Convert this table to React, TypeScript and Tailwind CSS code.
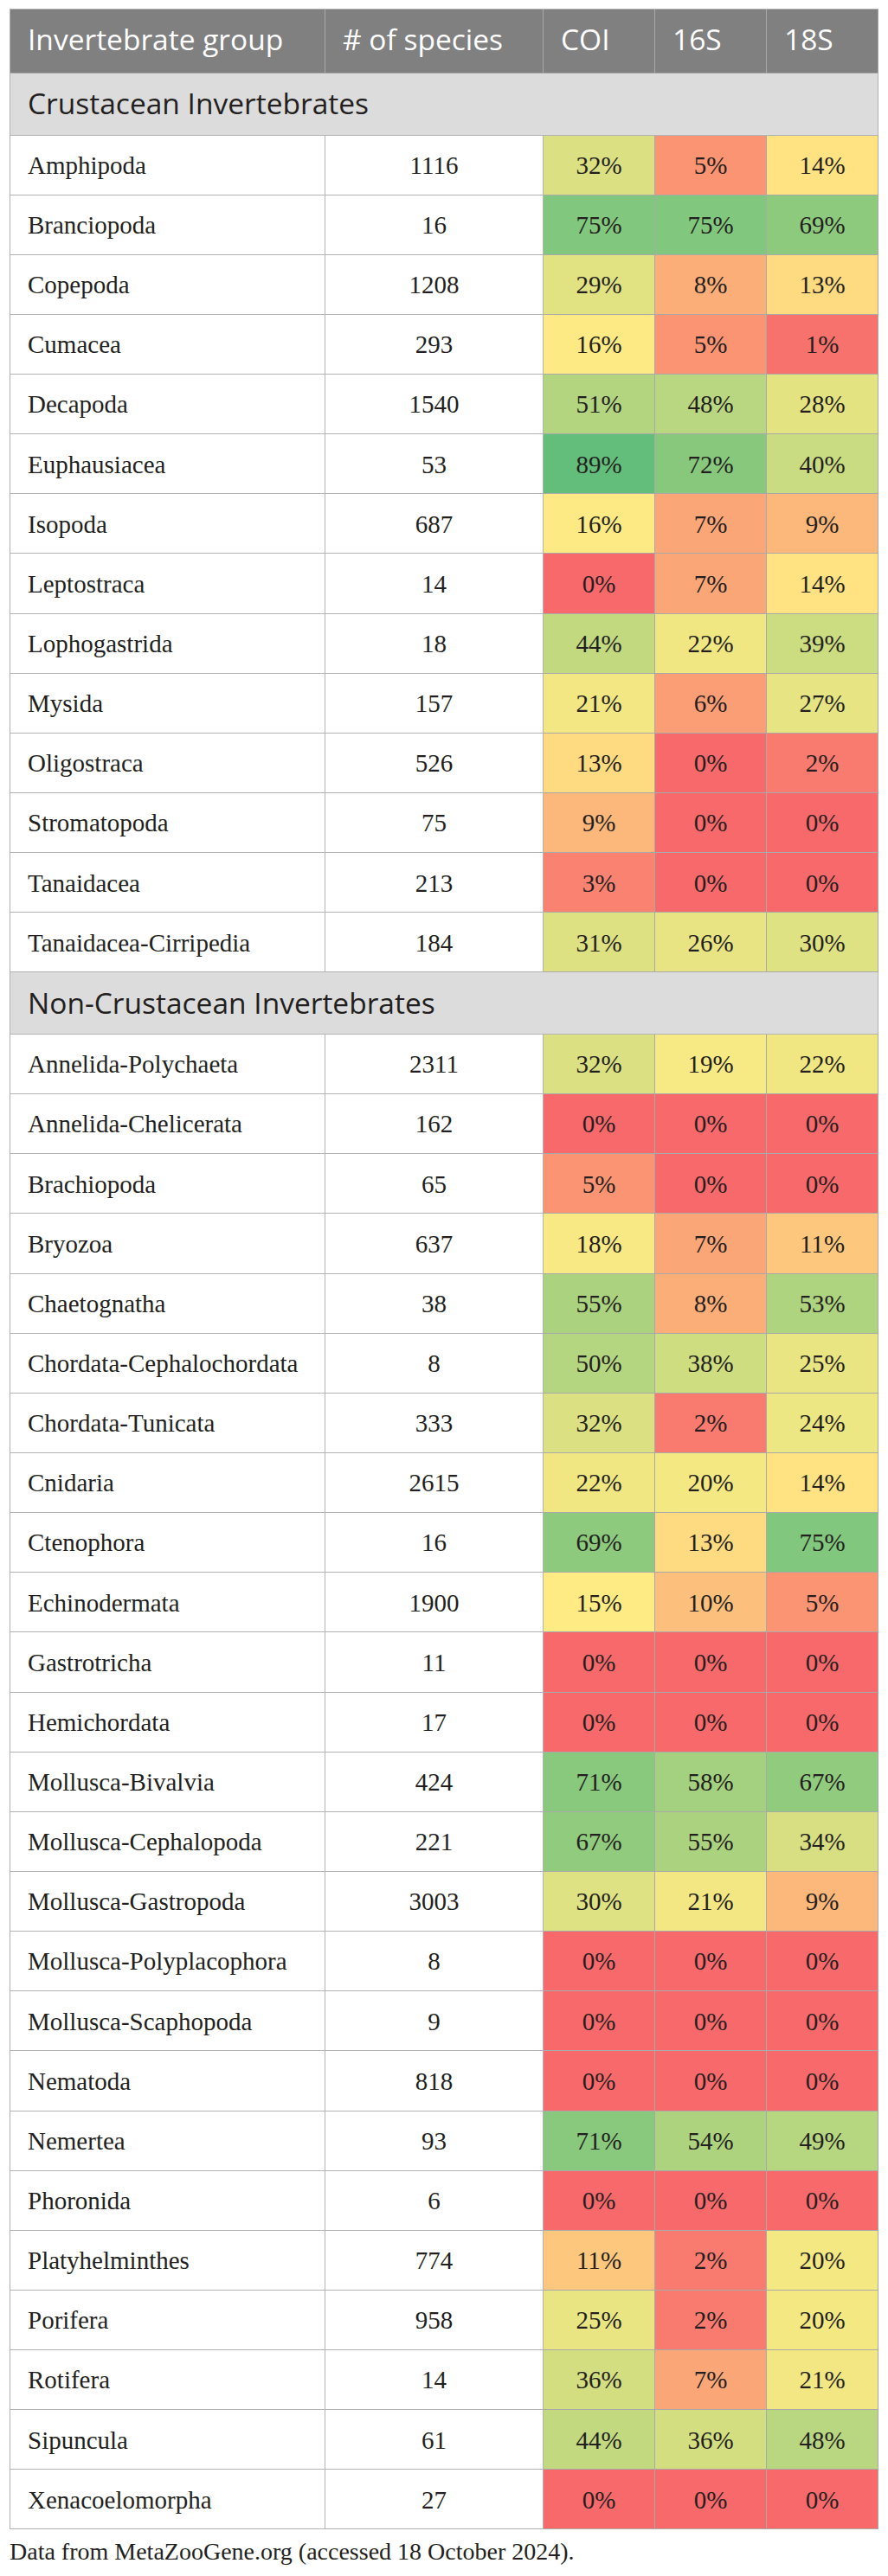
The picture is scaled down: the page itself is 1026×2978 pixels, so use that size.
import React from 'react';

type Row = [string, number, number, number, number];

const crustacean: Row[] = [
  ['Amphipoda', 1116, 32, 5, 14],
  ['Branciopoda', 16, 75, 75, 69],
  ['Copepoda', 1208, 29, 8, 13],
  ['Cumacea', 293, 16, 5, 1],
  ['Decapoda', 1540, 51, 48, 28],
  ['Euphausiacea', 53, 89, 72, 40],
  ['Isopoda', 687, 16, 7, 9],
  ['Leptostraca', 14, 0, 7, 14],
  ['Lophogastrida', 18, 44, 22, 39],
  ['Mysida', 157, 21, 6, 27],
  ['Oligostraca', 526, 13, 0, 2],
  ['Stromatopoda', 75, 9, 0, 0],
  ['Tanaidacea', 213, 3, 0, 0],
  ['Tanaidacea-Cirripedia', 184, 31, 26, 30],
];

const nonCrustacean: Row[] = [
  ['Annelida-Polychaeta', 2311, 32, 19, 22],
  ['Annelida-Chelicerata', 162, 0, 0, 0],
  ['Brachiopoda', 65, 5, 0, 0],
  ['Bryozoa', 637, 18, 7, 11],
  ['Chaetognatha', 38, 55, 8, 53],
  ['Chordata-Cephalochordata', 8, 50, 38, 25],
  ['Chordata-Tunicata', 333, 32, 2, 24],
  ['Cnidaria', 2615, 22, 20, 14],
  ['Ctenophora', 16, 69, 13, 75],
  ['Echinodermata', 1900, 15, 10, 5],
  ['Gastrotricha', 11, 0, 0, 0],
  ['Hemichordata', 17, 0, 0, 0],
  ['Mollusca-Bivalvia', 424, 71, 58, 67],
  ['Mollusca-Cephalopoda', 221, 67, 55, 34],
  ['Mollusca-Gastropoda', 3003, 30, 21, 9],
  ['Mollusca-Polyplacophora', 8, 0, 0, 0],
  ['Mollusca-Scaphopoda', 9, 0, 0, 0],
  ['Nematoda', 818, 0, 0, 0],
  ['Nemertea', 93, 71, 54, 49],
  ['Phoronida', 6, 0, 0, 0],
  ['Platyhelminthes', 774, 11, 2, 20],
  ['Porifera', 958, 25, 2, 20],
  ['Rotifera', 14, 36, 7, 21],
  ['Sipuncula', 61, 44, 36, 48],
  ['Xenacoelomorpha', 27, 0, 0, 0],
];

// red -> yellow -> green scale, yellow at 15%
const RED = [248, 105, 107];
const YELLOW = [255, 235, 132];
const GREEN = [99, 190, 123];
const MID = 15;
const MAX = 89;

function mix(a: number[], b: number[], t: number): string {
  const c = a.map((v, i) => Math.round(v + (b[i] - v) * t));
  return `rgb(${c[0]}, ${c[1]}, ${c[2]})`;
}

function heat(v: number): string {
  if (v <= MID) return mix(RED, YELLOW, v / MID);
  return mix(YELLOW, GREEN, Math.min((v - MID) / (MAX - MID), 1));
}

function HeaderCell({ children }: { children: React.ReactNode }) {
  return (
    <div className="flex h-[74px] items-center border-r border-b border-[#a9a9a9] bg-[#808080] pl-[20px] pb-[4px] text-[33.5px] text-white [font-family:'Open_Sans',sans-serif]">
      {children}
    </div>
  );
}

function Section({ title }: { title: string }) {
  return (
    <div className="col-span-5 flex h-[71.5px] items-center border-r border-b border-[#b3b3b3] bg-[#dcdcdc] pl-[20px] pb-[2px] text-[33.5px] text-[#231f20] [font-family:'Open_Sans',sans-serif]">
      {title}
    </div>
  );
}

function DataRow({ row }: { row: Row }) {
  const [name, count, ...pcts] = row;
  return (
    <>
      <div className="flex h-[69.15px] items-center border-r border-b border-[#b3b3b3] pl-[20px] pt-[2px]">{name}</div>
      <div className="flex h-[69.15px] items-center justify-center border-r border-b border-[#b3b3b3] pt-[2px]">{count}</div>
      {pcts.map((p, i) => (
        <div
          key={i}
          className="flex h-[69.15px] items-center justify-center border-r border-b border-[#a9a9a9] pt-[2px]"
          style={{ backgroundColor: heat(p) }}
        >
          {p}%
        </div>
      ))}
    </>
  );
}

export default function App() {
  return (
    <div className="min-h-[2978px] bg-white pl-[11px] pt-[10px]">
      <div className="grid w-[1004px] grid-cols-[364px_252px_129px_129px_129px] border-t border-l border-[#b3b3b3] text-[29px] text-[#231f20] [font-family:'Liberation_Serif',serif]">
        <HeaderCell>Invertebrate group</HeaderCell>
        <HeaderCell># of species</HeaderCell>
        <HeaderCell>COI</HeaderCell>
        <HeaderCell>16S</HeaderCell>
        <HeaderCell>18S</HeaderCell>
        <Section title="Crustacean Invertebrates" />
        {crustacean.map((r) => (
          <DataRow key={r[0]} row={r} />
        ))}
        <Section title="Non-Crustacean Invertebrates" />
        {nonCrustacean.map((r) => (
          <DataRow key={r[0]} row={r} />
        ))}
      </div>
      <p className="mt-[12px] text-[28px] leading-none text-[#231f20] [font-family:'Liberation_Serif',serif]">
        Data from MetaZooGene.org (accessed 18 October 2024).
      </p>
    </div>
  );
}
